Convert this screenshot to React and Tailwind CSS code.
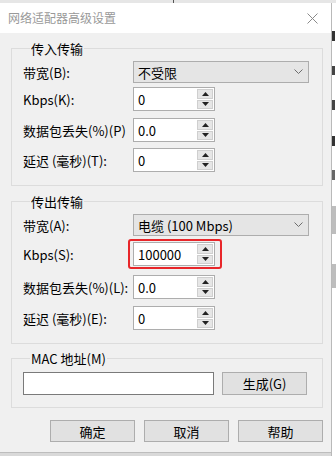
import React from "react";

const font = { fontFamily: '"Noto Sans CJK SC", "Noto Sans", sans-serif' };

function Chevron() {
    return (
        <svg width="9" height="6" viewBox="0 0 9 6" className="mr-[5px]">
            <path d="M0.5 0.5 L4.5 4.5 L8.5 0.5" fill="none" stroke="#6d6d6d" strokeWidth="1" />
        </svg>
    );
}

function Select({ value }) {
    return (
        <div className="w-[176px] h-[22px] bg-[#e5e5e5] border border-[#adadad] flex items-center justify-between pl-[4px]">
            <span className="text-[13px] text-black leading-none">{value}</span>
            <Chevron />
        </div>
    );
}

function Spinner({ value }) {
    return (
        <div className="w-[82px] h-[24px] bg-white border border-[#adadad] flex items-stretch">
            <div className="flex-1 flex items-center pl-[4px] text-[13px] text-black leading-none">{value}</div>
            <div className="w-[16px] my-[1px] mr-[1px] flex flex-col gap-[1px]">
                <div className="flex-1 bg-[#e6e6e6] border border-[#cfcfcf] flex items-center justify-center">
                    <svg width="7" height="4" viewBox="0 0 7 4"><path d="M3.5 0 L7 4 L0 4 Z" fill="#222" /></svg>
                </div>
                <div className="flex-1 bg-[#e6e6e6] border border-[#cfcfcf] flex items-center justify-center">
                    <svg width="7" height="4" viewBox="0 0 7 4"><path d="M0 0 L7 0 L3.5 4 Z" fill="#222" /></svg>
                </div>
            </div>
        </div>
    );
}

function Row({ label, children, className = "" }) {
    return (
        <div className={`flex items-center ${className}`}>
            <span className="w-[110px] text-[13px] text-black leading-none whitespace-nowrap">{label}</span>
            {children}
        </div>
    );
}

function Group({ title, children, className = "" }) {
    return (
        <fieldset className={`w-[312px] ml-[11px] border border-[#dcdcdc] px-[11px] ${className}`}>
            <legend className="ml-[7px] px-[1px] text-[13px] text-black leading-[17px]">{title}</legend>
            {children}
        </fieldset>
    );
}

function Button({ children, className = "" }) {
    return (
        <div className={`h-[22px] bg-[#e1e1e1] border border-[#adadad] flex items-center justify-center text-[13px] text-black leading-none ${className}`}>
            {children}
        </div>
    );
}

export default function App() {
    return (
        <div className="w-[336px] h-[456px] overflow-hidden bg-white flex flex-col" style={font}>
            <div className="h-[3px] bg-[#e6e6e6] flex">
                <div className="ml-[173px] w-[1px] bg-[#555]"></div>
            </div>
            <div className="flex flex-1">
                <div className="w-[332px] flex flex-col bg-[#f0f0f0] border-r border-[#b9b9b9]">
                    <div className="h-[30px] bg-white flex items-center justify-between pl-[8px] pr-[13px]">
                        <span className="text-[12px] text-[#999] leading-none">网络适配器高级设置</span>
                        <svg width="11" height="11" viewBox="0 0 11 11">
                            <path d="M0.5 0.5 L10.5 10.5 M10.5 0.5 L0.5 10.5" stroke="#8a8a8a" strokeWidth="1" />
                        </svg>
                    </div>

                    <Group title="传入传输" className="mt-[7px] pb-[13px]">
                        <Row label="带宽(B):" className="mt-[4px]"><Select value="不受限" /></Row>
                        <Row label="Kbps(K):" className="mt-[4px]"><Spinner value="0" /></Row>
                        <Row label="数据包丢失(%)(P)" className="mt-[7px]"><Spinner value="0.0" /></Row>
                        <Row label="延迟 (毫秒)(T):" className="mt-[6px]"><Spinner value="0" /></Row>
                    </Group>

                    <Group title="传出传输" className="mt-[7px] pb-[13px]">
                        <Row label="带宽(A):" className="mt-[4px]"><Select value="电缆 (100 Mbps)" /></Row>
                        <Row label="Kbps(S):" className="mt-[6px]">
                            <div className="relative">
                                <Spinner value="100000" />
                                <span className="absolute -left-[5px] -right-[7px] -top-[3px] -bottom-[3px] border-2 border-[#e8262a] rounded-[3px]"></span>
                            </div>
                        </Row>
                        <Row label="数据包丢失(%)(L):" className="mt-[9px]"><Spinner value="0.0" /></Row>
                        <Row label="延迟 (毫秒)(E):" className="mt-[7px]"><Spinner value="0" /></Row>
                    </Group>

                    <Group title="MAC 地址(M)" className="mt-[6px] pb-[12px]">
                        <div className="flex items-center mt-[5px]">
                            <div className="w-[191px] h-[23px] bg-white border border-[#7a7a7a]"></div>
                            <Button className="ml-[8px] w-[85px] h-[23px]">生成(G)</Button>
                        </div>
                    </Group>

                    <div className="flex justify-end gap-[9px] mt-[12px] pr-[8px]">
                        <Button className="w-[85px]">确定</Button>
                        <Button className="w-[85px]">取消</Button>
                        <Button className="w-[85px]">帮助</Button>
                    </div>
                    <div className="flex-1"></div>
                    <div className="h-[4px] bg-[#d9d9d9] border-t border-[#bdbdbd]"></div>
                </div>
                {/* clipped bits of the window behind */}
                <div className="flex-1 flex flex-col pt-[28px]">
                    <div className="h-[10px] w-[3px] bg-[#333]"></div>
                    <div className="h-[9px] w-[3px] bg-[#444] mt-[25px]"></div>
                    <div className="h-[10px] w-[3px] bg-[#444] mt-[25px]"></div>
                    <div className="h-[10px] w-[3px] bg-[#333] mt-[26px]"></div>
                    <div className="h-[10px] w-[3px] bg-[#666] mt-[24px]"></div>
                    <div className="h-[28px] w-[4px] bg-[#bdbdbd] mt-[26px]"></div>
                    <div className="h-[24px] w-[4px] bg-[#bdbdbd] mt-[30px]"></div>
                </div>
            </div>
        </div>
    );
}
